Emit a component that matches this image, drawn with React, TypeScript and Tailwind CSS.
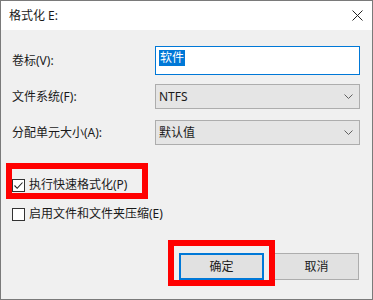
import React from "react";

function Chevron() {
    return (
        <svg width="9" height="5" viewBox="0 0 9 5" className="shrink-0">
            <path d="M0.5 0.5 L4.5 4.5 L8.5 0.5" fill="none" stroke="#606060" strokeWidth="1" />
        </svg>
    );
}

function Checkbox({ checked }: { checked?: boolean }) {
    return (
        <span className="w-[13px] h-[13px] border border-[#333333] bg-white flex items-center justify-center shrink-0">
            {checked && (
                <svg width="11" height="11" viewBox="0 0 11 11">
                    <path d="M1.5 5.5 L4.2 8.3 L9.5 2.5" fill="none" stroke="#222222" strokeWidth="1.1" />
                </svg>
            )}
        </span>
    );
}

function App() {
    return (
        <div className="w-[373px] h-[300px] relative bg-[#f0f0f0] border border-[#7a7a7a] flex flex-col text-[12px] leading-[16px] text-[#1a1a1a] font-['Noto_Sans','Noto_Sans_CJK_SC',sans-serif] overflow-hidden">
            {/* title bar */}
            <div className="h-[29px] bg-white flex items-center justify-between pl-[8px] pr-[9px] shrink-0">
                <span>格式化 E:</span>
                <svg width="11" height="11" viewBox="0 0 11 11">
                    <path d="M0.5 0.5 L10.5 10.5 M10.5 0.5 L0.5 10.5" stroke="#222222" strokeWidth="1" />
                </svg>
            </div>

            <div className="flex-1 flex flex-col pl-[11px] pr-[12px] pt-[16px]">
                <div className="grid grid-cols-[143px_205px] items-center">
                    <span>卷标(V):</span>
                    <div className="h-[29px] border border-[#0078d7] bg-white pl-[3px] pt-[3px]">
                        <span className="bg-[#0078d7] text-white inline-block leading-[16px] px-px">软件</span>
                    </div>

                    <span className="mt-[9px]">文件系统(F):</span>
                    <div className="mt-[9px] h-[25px] border border-[#adadad] bg-[#e5e5e5] flex items-center justify-between pl-[3px] pr-[6px]">
                        <span>NTFS</span>
                        <Chevron />
                    </div>

                    <span className="mt-[11px]">分配单元大小(A):</span>
                    <div className="mt-[11px] h-[25px] border border-[#adadad] bg-[#e5e5e5] flex items-center justify-between pl-[3px] pr-[6px]">
                        <span>默认值</span>
                        <Chevron />
                    </div>
                </div>

                <div className="mt-[32px] flex flex-col gap-[13px]">
                    <label className="flex items-center gap-[4px] h-[16px]">
                        <Checkbox checked />
                        <span>执行快速格式化(P)</span>
                    </label>
                    <label className="flex items-center gap-[4px] h-[16px]">
                        <Checkbox />
                        <span>启用文件和文件夹压缩(E)</span>
                    </label>
                </div>

                <div className="mt-[31px] flex justify-end gap-[10px] mr-[1px]">
                    <button type="button" className="w-[85px] h-[27px] bg-[#e1e1e1] border-2 border-[#0078d7]">
                        确定
                    </button>
                    <button type="button" className="w-[85px] h-[27px] bg-[#e1e1e1] border border-[#adadad]">
                        取消
                    </button>
                </div>
            </div>

            {/* red annotation boxes */}
            <div className="absolute left-[5px] top-[162px] w-[142px] h-[36px] border-[6px] border-[#ff0000] pointer-events-none" />
            <div className="absolute left-[167px] top-[239px] w-[107px] h-[46px] border-[6px] border-[#ff0000] pointer-events-none" />
        </div>
    );
}

export default App;
